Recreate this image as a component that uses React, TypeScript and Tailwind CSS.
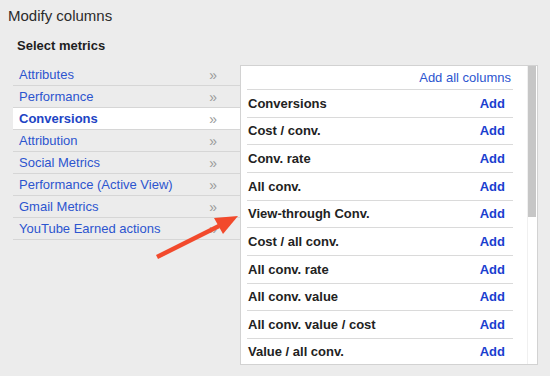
const categories = [
  "Attributes",
  "Performance",
  "Conversions",
  "Attribution",
  "Social Metrics",
  "Performance (Active View)",
  "Gmail Metrics",
  "YouTube Earned actions",
];

const metrics = [
  "Conversions",
  "Cost / conv.",
  "Conv. rate",
  "All conv.",
  "View-through Conv.",
  "Cost / all conv.",
  "All conv. rate",
  "All conv. value",
  "All conv. value / cost",
  "Value / all conv.",
];

export default function App() {
  return (
    <div className="relative w-[550px] h-[376px] overflow-hidden bg-[#ececec] font-['Liberation_Sans',Arial,sans-serif]">
      <h1 className="pl-2 pt-[7px] text-[15px] leading-[18px] text-[#2b2b2b]">Modify columns</h1>
      <h2 className="pl-[17px] mt-[13px] text-[13px] leading-[16px] font-bold text-[#1e1e1e]">Select metrics</h2>

      <div className="flex mt-[10px]">
        {/* category list */}
        <ul className="ml-[13px] w-[227px]">
          {categories.map((c) => {
            const active = c === "Conversions";
            return (
              <li
                key={c}
                className={
                  active
                    ? "flex items-center justify-between h-[22px] border-b border-[#d6d6d6] bg-white pl-[6px] pr-[23px]"
                    : "flex items-center justify-between h-[22px] border-b border-[#d6d6d6] pl-[6px] pr-[23px]"
                }
              >
                <span
                  className={
                    active
                      ? "text-[13px] font-bold text-[#1d44c4]"
                      : "text-[13px] text-[#2c55cf]"
                  }
                >
                  {c}
                </span>
                <span className="text-[14px] leading-none text-[#9a9a9a]">»</span>
              </li>
            );
          })}
        </ul>

        {/* metrics panel */}
        <div className="mt-[1px] w-[298px] h-[300px] flex border border-[#d2d2d2] bg-white overflow-hidden">
          <div className="flex-1 pl-[6px] pr-[14px]">
            <div className="flex justify-end items-center h-[24px] border-b border-[#dadada] pr-[2px]">
              <span className="text-[13px] text-[#2c55cf]">Add all columns</span>
            </div>
            {metrics.map((m) => (
              <div
                key={m}
                className="flex items-center justify-between h-[27.67px] border-b border-[#dadada] pl-px pr-[8px]"
              >
                <span className="text-[13px] font-bold text-[#222]">{m}</span>
                <span className="text-[13px] font-bold text-[#1a3ecf]">Add</span>
              </div>
            ))}
          </div>
          <div className="w-[10px] border-l border-[#f0f0f0]">
            <div className="w-[8px] h-[151px] bg-[#c6c6c6]" />
          </div>
        </div>
      </div>

      {/* annotation arrow */}
      <svg className="absolute left-0 top-0" width="550" height="376" viewBox="0 0 550 376">
        <line x1="157" y1="257" x2="219" y2="226" stroke="#f24a2c" strokeWidth="4.5" />
        <polygon points="238,216 214,218 223,234" fill="#f24a2c" />
      </svg>
    </div>
  );
}
